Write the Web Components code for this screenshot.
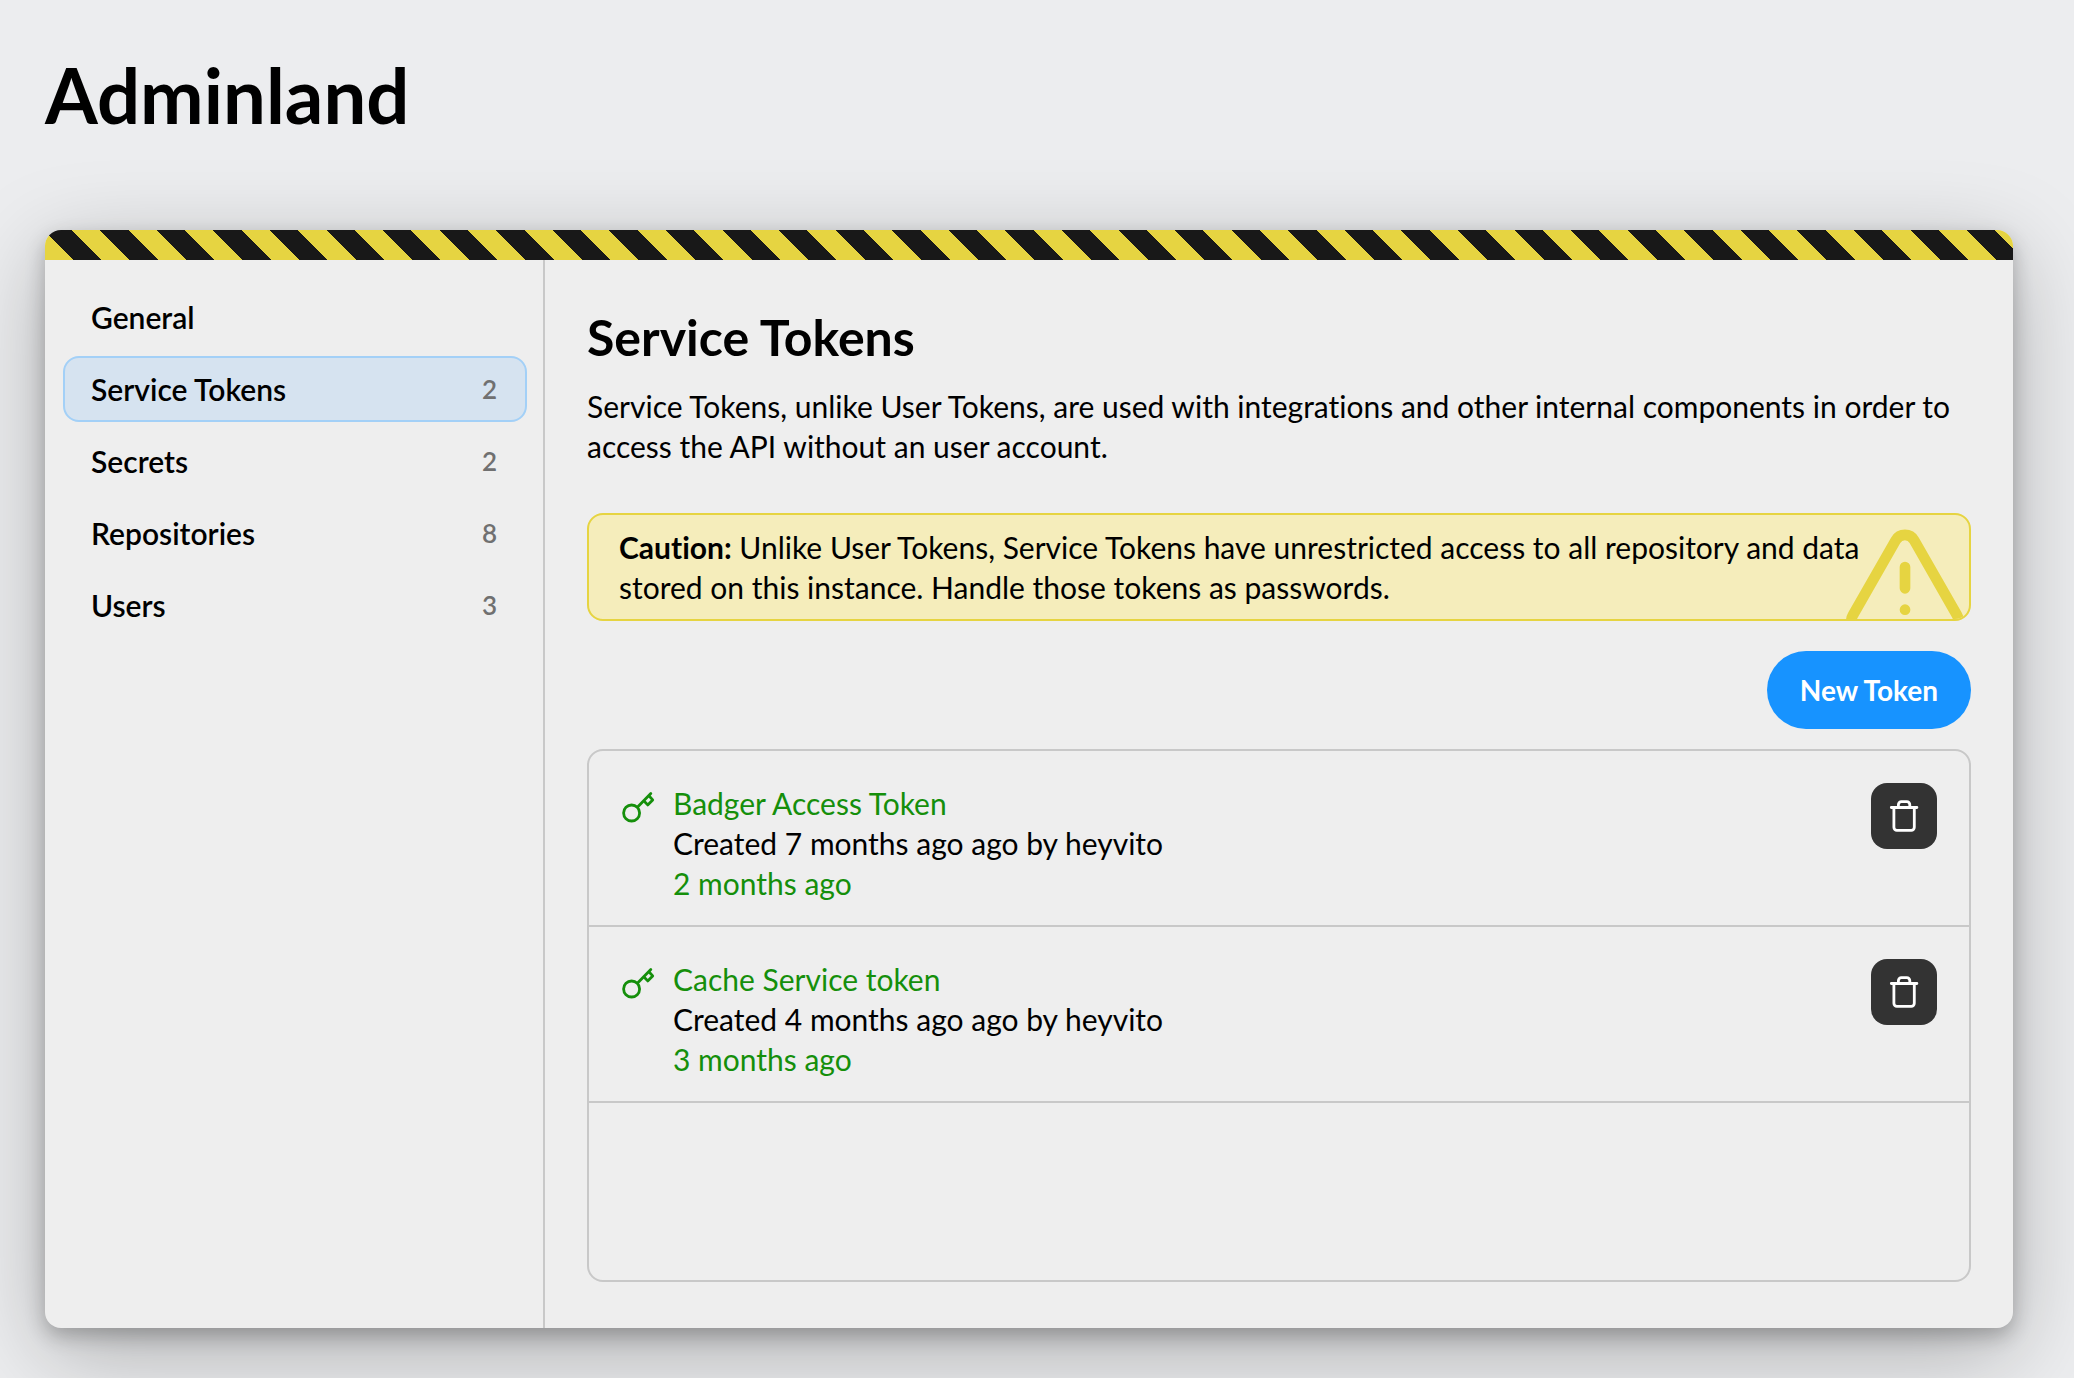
<!DOCTYPE html>
<html lang="en">
<head>
<meta charset="utf-8">
<title>Adminland</title>
<style>
  body {
    margin: 0;
    font: 400 30px/40px Lato, Inter, sans-serif;
    font-variant-ligatures: none;
    color: #000;
    background: #ecedef;
  }
</style>
</head>
<body>
<admin-page>
  <span slot="title">Adminland</span>
  <hazard-card>
    <nav-item slot="nav" href="#general">General</nav-item>
    <nav-item slot="nav" href="#service-tokens" count="2" current>Service Tokens</nav-item>
    <nav-item slot="nav" href="#secrets" count="2">Secrets</nav-item>
    <nav-item slot="nav" href="#repositories" count="8">Repositories</nav-item>
    <nav-item slot="nav" href="#users" count="3">Users</nav-item>
    <section-intro>
      <span slot="heading">Service Tokens</span>
      Service Tokens, unlike User Tokens, are used with integrations and other internal components in order to access the API without an user account.
    </section-intro>
    <caution-note><b>Caution:</b> Unlike User Tokens, Service Tokens have unrestricted access to all repository and data stored on this instance. Handle those tokens as passwords.</caution-note>
    <pill-button>New Token</pill-button>
    <token-list>
      <token-row>
        <span slot="name">Badger Access Token</span>
        <span slot="created">Created 7 months ago ago by heyvito</span>
        <span slot="used">2 months ago</span>
      </token-row>
      <token-row>
        <span slot="name">Cache Service token</span>
        <span slot="created">Created 4 months ago ago by heyvito</span>
        <span slot="used">3 months ago</span>
      </token-row>
    </token-list>
  </hazard-card>
</admin-page>

<script>
  class Base extends HTMLElement {
    constructor() {
      super();
      this.attachShadow({ mode: 'open' }).innerHTML =
        '<style>* { box-sizing: border-box; } :host { box-sizing: border-box; }</style>' + this.constructor.markup;
    }
  }

  customElements.define('admin-page', class extends Base {
    static markup = `
      <style>
        :host { display: flex; flex-direction: column; gap: 90px; min-height: 100vh; padding: 50px 61px 50px 45px; }
        h1 { margin: 0; font-size: 76px; line-height: 90px; font-weight: 700; }
        main { flex: 1; display: flex; }
      </style>
      <h1><slot name="title"></slot></h1>
      <main><slot></slot></main>`;
  });

  customElements.define('hazard-card', class extends Base {
    static markup = `
      <style>
        :host {
          flex: 1; display: flex; flex-direction: column; overflow: hidden;
          border-radius: 16px; background: #eee;
          box-shadow: 0 24px 90px rgba(0, 0, 0, .27), 0 8px 20px rgba(0, 0, 0, .24);
        }
        .tape { height: 30px; background: repeating-linear-gradient(45deg, #e6d441 0 20px, #181818 20px 40px); }
        .columns { flex: 1; display: flex; }
        nav {
          flex: 0 0 500px; display: flex; flex-direction: column; gap: 6px;
          padding: 24px 16px 24px 18px; border-right: 2px solid #c8c8c8;
        }
        section { flex: 1; min-width: 0; display: flex; flex-direction: column; padding: 46px 42px; }
      </style>
      <div class="tape"></div>
      <div class="columns">
        <nav><slot name="nav"></slot></nav>
        <section><slot></slot></section>
      </div>`;
  });

  customElements.define('nav-item', class extends Base {
    static markup = `
      <style>
        :host { display: block; }
        a {
          display: flex; align-items: center; justify-content: space-between;
          height: 66px; padding: 0 28px 0 26px; border: 2px solid transparent; border-radius: 16px;
          color: inherit; font-weight: 600; text-decoration: none;
        }
        :host([current]) a { background: #d6e3f0; border-color: #a3d0f7; }
        .count { font-size: 26px; font-weight: 600; color: #707070; }
      </style>
      <a><slot></slot><span class="count"></span></a>`;
    connectedCallback() {
      const link = this.shadowRoot.querySelector('a');
      link.href = this.getAttribute('href');
      if (this.hasAttribute('current')) link.setAttribute('aria-current', 'page');
      this.shadowRoot.querySelector('.count').textContent = this.getAttribute('count') || '';
    }
  });

  customElements.define('section-intro', class extends Base {
    static markup = `
      <style>
        :host { display: block; margin-bottom: 47px; }
        h2 { margin: 0 0 18px; font-size: 50px; line-height: 62px; font-weight: 700; }
        p { margin: 0; }
      </style>
      <h2><slot name="heading"></slot></h2>
      <p><slot></slot></p>`;
  });

  customElements.define('caution-note', class extends Base {
    static markup = `
      <style>
        :host {
          display: block; position: relative; overflow: hidden; padding: 12px 30px;
          border: 2px solid #e6d441; border-radius: 16px; background: #f5edbb;
        }
        svg { position: absolute; top: 4px; right: 0; }
        p { position: relative; margin: 0; }
      </style>
      <svg width="128" height="128" viewBox="0 0 24 24" fill="none" stroke="#e6d441" stroke-width="2" stroke-linecap="round" stroke-linejoin="round" aria-hidden="true">
        <path d="m21.73 18-8-14a2 2 0 0 0-3.48 0l-8 14A2 2 0 0 0 4 21h16a2 2 0 0 0 1.73-3Z"/>
        <path d="M12 9v4M12 17h.01"/>
      </svg>
      <p><slot></slot></p>`;
  });

  customElements.define('pill-button', class extends Base {
    static markup = `
      <style>
        :host { display: flex; justify-content: flex-end; margin: 30px 0 20px; }
        button {
          height: 78px; padding: 0 33px; border: 0; border-radius: 39px;
          background: #1793ff; color: #fff; font: 700 28px/40px Lato, Inter, sans-serif; cursor: pointer;
        }
      </style>
      <button type="button"><slot></slot></button>`;
  });

  customElements.define('token-list', class extends Base {
    static markup = `
      <style>
        :host { flex: 1; display: block; border: 2px solid #c8c8c8; border-radius: 16px; }
      </style>
      <div role="list"><slot></slot></div>`;
  });

  customElements.define('token-row', class extends Base {
    static markup = `
      <style>
        :host { display: flex; align-items: flex-start; gap: 18px; padding: 32px 32px 22px; border-bottom: 2px solid #c8c8c8; }
        .key { flex: none; margin-top: 8px; }
        .text { flex: 1; display: flex; flex-direction: column; }
        .green { color: #158f0b; }
        button {
          flex: none; display: grid; place-items: center; width: 66px; height: 66px; padding: 0;
          border: 0; border-radius: 16px; background: #333; cursor: pointer;
        }
      </style>
      <svg class="key" width="34" height="34" viewBox="0 0 34 34" fill="none" stroke="#158f0b" stroke-width="2.8" stroke-linecap="round" stroke-linejoin="round" aria-hidden="true">
        <circle cx="10.6" cy="22" r="8"/>
        <path d="M16.6 16 29.8 2.6M22.8 9.8l3.9 4.1 5-5-3.8-4.1"/>
      </svg>
      <div class="text">
        <span class="green"><slot name="name"></slot></span>
        <span><slot name="created"></slot></span>
        <span class="green"><slot name="used"></slot></span>
      </div>
      <button type="button" aria-label="Delete">
        <svg width="66" height="66" viewBox="0 0 66 66" fill="none" stroke="#fff" stroke-width="2.8" stroke-linecap="round" stroke-linejoin="round" aria-hidden="true">
          <path d="M20.3 24.5h25.6M22.9 24.5v19.8a3 3 0 0 0 3 3h14.4a3 3 0 0 0 3-3V24.5M27.4 24.5v-2.8a3 3 0 0 1 3-3h5.4a3 3 0 0 1 3 3v2.8"/>
        </svg>
      </button>`;
    connectedCallback() { this.setAttribute('role', 'listitem'); }
  });
</script>
</body>
</html>
